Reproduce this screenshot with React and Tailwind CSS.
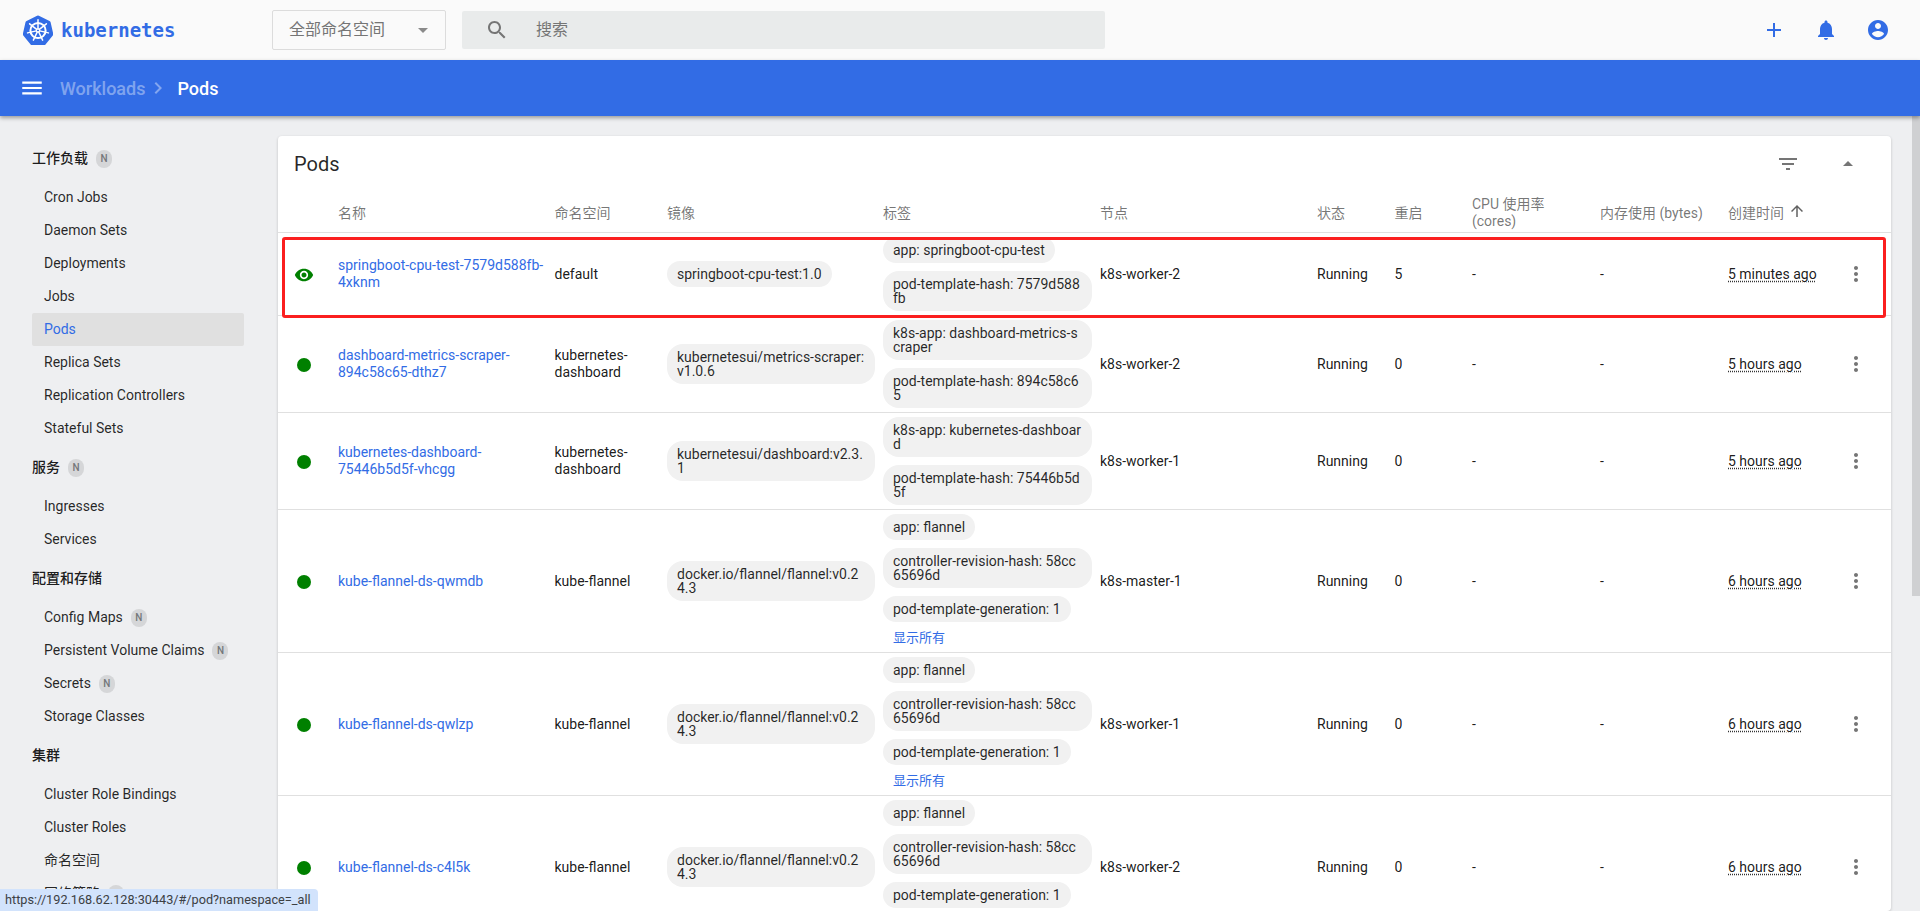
const P = {
  add: "M19 13h-6v6h-2v-6H5v-2h6V5h2v6h6v2z",
  bell: "M12 22c1.1 0 2-.9 2-2h-4c0 1.1.89 2 2 2zm6-6v-5c0-3.07-1.64-5.64-4.5-6.32V4c0-.83-.67-1.5-1.5-1.5s-1.5.67-1.5 1.5v.68C7.63 5.36 6 7.92 6 11v5l-2 2v1h16v-1l-2-2z",
  account: "M12 2C6.48 2 2 6.48 2 12s4.48 10 10 10 10-4.48 10-10S17.52 2 12 2zm0 3c1.66 0 3 1.34 3 3s-1.34 3-3 3-3-1.34-3-3 1.34-3 3-3zm0 14.2c-2.5 0-4.71-1.28-6-3.22.03-1.99 4-3.08 6-3.08 1.99 0 5.97 1.09 6 3.08-1.29 1.94-3.5 3.22-6 3.22z",
  search: "M15.5 14h-.79l-.28-.27C15.41 12.59 16 11.11 16 9.5 16 5.91 13.09 3 9.5 3S3 5.91 3 9.5 5.91 16 9.5 16c1.61 0 3.09-.59 4.23-1.57l.27.28v.79l5 4.99L20.49 19l-4.99-5zm-6 0C7.01 14 5 11.99 5 9.5S7.01 5 9.5 5 14 7.01 14 9.5 11.99 14 9.5 14z",
  menu: "M3 18h18v-2H3v2zm0-5h18v-2H3v2zm0-7v2h18V6H3z",
  filter: "M10 18h4v-2h-4v2zM3 6v2h18V6H3zm3 7h12v-2H6v2z",
  dropUp: "M7 14l5-5 5 5z",
  dropDown: "M7 10l5 5 5-5z",
  up: "M4 12l1.41 1.41L11 7.83V20h2V7.83l5.58 5.59L20 12l-8-8-8 8z",
  more: "M12 8c1.1 0 2-.9 2-2s-.9-2-2-2-2 .9-2 2 .9 2 2 2zm0 2c-1.1 0-2 .9-2 2s.9 2 2 2 2-.9 2-2-.9-2-2-2zm0 6c-1.1 0-2 .9-2 2s.9 2 2 2 2-.9 2-2-.9-2-2-2z",
  eye: "M12 4.5C7 4.5 2.73 7.61 1 12c1.73 4.39 6 7.5 11 7.5s9.27-3.11 11-7.5c-1.73-4.39-6-7.5-11-7.5zM12 17c-2.76 0-5-2.24-5-5s2.24-5 5-5 5 2.24 5 5-2.24 5-5 5zm0-8c-1.66 0-3 1.34-3 3s1.34 3 3 3 3-1.34 3-3-1.34-3-3-3z",
  chevron: "M10 6L8.59 7.41 13.17 12l-4.58 4.59L10 18l6-6z",
};

function Icon({ d, className }) {
  return (
    <svg viewBox="0 0 24 24" className={className} fill="currentColor">
      <path d={d} />
    </svg>
  );
}

function K8sLogo() {
  const spokes = [0, 51.4, 102.8, 154.3, 205.7, 257.1, 308.6];
  return (
    <svg viewBox="0 0 30 30" className="w-[30px] h-[30px] shrink-0">
      <path
        d="M15 .6a2 2 0 0 1 .9.2l10.6 5.1a2 2 0 0 1 1.1 1.4l2.6 11.4a2 2 0 0 1-.4 1.7l-7.3 9.1a2 2 0 0 1-1.6.8H9.2a2 2 0 0 1-1.6-.8L.3 20.4a2 2 0 0 1-.4-1.7L2.5 7.3a2 2 0 0 1 1.1-1.4L14.1.8A2 2 0 0 1 15 .6z"
        fill="#326ce5"
      />
      <g stroke="#fff" strokeLinecap="round" fill="none">
        <circle cx="15" cy="15.5" r="7.6" strokeWidth="2" />
        <circle cx="15" cy="15.5" r="1.7" strokeWidth="1.3" />
        {spokes.map((a) => (
          <g key={a} transform={`rotate(${a} 15 15.5)`}>
            <path d="M15 13.8V4.8" strokeWidth="1.5" />
          </g>
        ))}
      </g>
    </svg>
  );
}

function Badge() {
  return (
    <span className="inline-flex items-center justify-center w-4 h-[18px] rounded-full bg-[#d5d6d8] text-[10px] text-[#73767a] font-medium ml-2 leading-none">
      N
    </span>
  );
}

const sidebar = [
  { title: "工作负载", badge: true, items: [["Cron Jobs"], ["Daemon Sets"], ["Deployments"], ["Jobs"], ["Pods", false, true], ["Replica Sets"], ["Replication Controllers"], ["Stateful Sets"]] },
  { title: "服务", badge: true, items: [["Ingresses"], ["Services"]] },
  { title: "配置和存储", items: [["Config Maps", true], ["Persistent Volume Claims", true], ["Secrets", true], ["Storage Classes"]] },
  { title: "集群", items: [["Cluster Role Bindings"], ["Cluster Roles"], ["命名空间"], ["网络策略", true]] },
];

function Sidebar() {
  return (
    <nav className="w-[278px] shrink-0 pt-5 pl-8 pr-[34px] text-[14px] text-black/85">
      {sidebar.map((s) => (
        <div key={s.title}>
          <div className="h-[45px] flex items-center font-medium text-black/90">
            {s.title}
            {s.badge && <Badge />}
          </div>
          {s.items.map(([label, badge, active]) => (
            <div
              key={label}
              className={
                active
                  ? "h-[33px] flex items-center pl-3 rounded-[2px] bg-[#e0e0e0] text-[#326ce5]"
                  : "h-[33px] flex items-center pl-3"
              }
            >
              {label}
              {badge && <Badge />}
            </div>
          ))}
        </div>
      ))}
    </nav>
  );
}

const flannel = [
  "app: flannel",
  "controller-revision-hash: 58cc65696d",
  "pod-template-generation: 1",
];

const rows = [
  { name: "springboot-cpu-test-7579d588fb-4xknm", ns: "default", image: "springboot-cpu-test:1.0", labels: ["app: springboot-cpu-test", "pod-template-hash: 7579d588fb"], node: "k8s-worker-2", restarts: "5", age: "5 minutes ago", eye: true, h: "h-[83px]" },
  { name: "dashboard-metrics-scraper-894c58c65-dthz7", ns: "kubernetes-dashboard", image: "kubernetesui/metrics-scraper:v1.0.6", labels: ["k8s-app: dashboard-metrics-scraper", "pod-template-hash: 894c58c65"], node: "k8s-worker-2", restarts: "0", age: "5 hours ago", h: "h-[97px]" },
  { name: "kubernetes-dashboard-75446b5d5f-vhcgg", ns: "kubernetes-dashboard", image: "kubernetesui/dashboard:v2.3.1", labels: ["k8s-app: kubernetes-dashboard", "pod-template-hash: 75446b5d5f"], node: "k8s-worker-1", restarts: "0", age: "5 hours ago", h: "h-[97px]" },
  { name: "kube-flannel-ds-qwmdb", ns: "kube-flannel", image: "docker.io/flannel/flannel:v0.24.3", labels: flannel, more: true, node: "k8s-master-1", restarts: "0", age: "6 hours ago", h: "h-[143px]" },
  { name: "kube-flannel-ds-qwlzp", ns: "kube-flannel", image: "docker.io/flannel/flannel:v0.24.3", labels: flannel, more: true, node: "k8s-worker-1", restarts: "0", age: "6 hours ago", h: "h-[143px]" },
  { name: "kube-flannel-ds-c4l5k", ns: "kube-flannel", image: "docker.io/flannel/flannel:v0.24.3", labels: flannel, more: true, node: "k8s-worker-2", restarts: "0", age: "6 hours ago", h: "h-[143px]" },
];

const cols = "grid grid-cols-[60px_216.5px_112.5px_216px_217px_217px_77.5px_77.5px_128px_128px_1fr] items-center";

function Chip({ children, className = "" }) {
  return (
    <span className={`block w-fit rounded-[16px] bg-[#f1f1f1] px-2.5 py-1.5 leading-[14px] break-all text-black/85 ${className}`}>
      {children}
    </span>
  );
}

function Row({ r, first }) {
  return (
    <div className={`relative ${cols} ${r.h} shrink-0 border-b border-[#e0e0e0] text-[14px] text-black/90`}>
      <div className="flex justify-center pr-2 pt-[2px]">
        {r.eye ? (
          <Icon d={P.eye} className="w-5 h-5 text-[#008000]" />
        ) : (
          <span className="w-[14px] h-[14px] rounded-full bg-[#008000]" />
        )}
      </div>
      <a className="text-[#326ce5] leading-[17px] pr-2">{r.name}</a>
      <div className="leading-[17px] pr-2">{r.ns}</div>
      <div>
        <Chip className="max-w-[208px]">{r.image}</Chip>
      </div>
      <div className="flex flex-col">
        {r.labels.map((l) => (
          <Chip key={l} className="max-w-[209px] my-1">{l}</Chip>
        ))}
        {r.more && <a className="text-[#326ce5] text-[13px] h-[26px] leading-[24px] ml-2.5">显示所有</a>}
      </div>
      <div>{r.node}</div>
      <div>Running</div>
      <div>{r.restarts}</div>
      <div>-</div>
      <div>-</div>
      <div className="flex items-center justify-between pr-[23px]">
        <span className="underline decoration-dotted underline-offset-2 decoration-black/80">{r.age}</span>
        <Icon d={P.more} className="w-6 h-6 text-[#757575]" />
      </div>
      {first && (
        <div className="absolute left-[4px] right-[5px] top-[4px] h-[81px] border-[3px] border-[#fb1f1f] rounded-[3px] pointer-events-none" />
      )}
    </div>
  );
}

function Card() {
  return (
    <section className="w-[1613px] mt-5 bg-white rounded-[4px] shadow-[0_1px_3px_rgba(0,0,0,0.2)] flex flex-col">
      <div className="h-[56px] flex items-center justify-between shrink-0 pl-4 pr-[31px]">
        <h1 className="text-[20px] text-black/85">Pods</h1>
        <div className="flex items-center gap-[36px] text-[#757575]">
          <Icon d={P.filter} className="w-6 h-6" />
          <Icon d={P.dropUp} className="w-6 h-6" />
        </div>
      </div>
      <div className={`${cols} h-[41px] pt-[2px] shrink-0 border-b border-[#e0e0e0] text-[14px] leading-[17px] text-black/55`}>
        <div />
        <div>名称</div>
        <div>命名空间</div>
        <div>镜像</div>
        <div>标签</div>
        <div>节点</div>
        <div>状态</div>
        <div>重启</div>
        <div className="w-[90px]">CPU 使用率 (cores)</div>
        <div>内存使用 (bytes)</div>
        <div className="flex items-center gap-1">
          创建时间
          <Icon d={P.up} className="w-[18px] h-[18px] text-[#616161] -mt-1" />
        </div>
      </div>
      {rows.map((r, i) => (
        <Row key={r.name} r={r} first={i === 0} />
      ))}
    </section>
  );
}

export default function App() {
  return (
    <div
      className="relative h-[911px] w-full overflow-hidden bg-[#eeeff1] flex flex-col"
      style={{ fontFamily: 'Roboto, "Noto Sans CJK SC", sans-serif' }}
    >
      <header className="h-[60px] shrink-0 bg-[#fafafa] flex items-center">
        <div className="w-[272px] shrink-0 flex items-center pl-[23px] gap-2">
          <K8sLogo />
          <span className="text-[19px] font-bold text-[#326ce5]" style={{ fontFamily: '"DejaVu Sans Mono", monospace' }}>kubernetes</span>
        </div>
        <div className="w-[174px] h-10 shrink-0 border border-[#dcdcdc] rounded-[2px] flex items-center justify-between pl-4 pr-2.5 text-[16px] text-[#757575]">
          全部命名空间
          <Icon d={P.dropDown} className="w-6 h-6 text-[#8a8a8a]" />
        </div>
        <div className="w-[643px] h-[38px] ml-4 shrink-0 rounded-[2px] bg-[#e9ebeb] flex items-center pl-[23px] gap-[12px] text-[16px] text-[#757575]">
          <Icon d={P.search} className="w-6 h-6" />
          <span className="ml-[15px]">搜索</span>
        </div>
        <div className="ml-auto flex items-center gap-7 pr-[30px] text-[#326ce5]">
          <Icon d={P.add} className="w-6 h-6" />
          <Icon d={P.bell} className="w-6 h-6" />
          <Icon d={P.account} className="w-6 h-6" />
        </div>
      </header>
      <div className="relative z-10 h-14 shrink-0 bg-[#326ce5] shadow-[0_2px_4px_rgba(0,0,0,0.35)] flex items-center pl-[19px] text-white text-[18px] font-medium">
        <Icon d={P.menu} className="w-[26px] h-[26px]" />
        <span className="ml-[15px] text-white/40">Workloads</span>
        <Icon d={P.chevron} className="w-6 h-6 ml-px text-white/40" />
        <span className="ml-[7px]">Pods</span>
      </div>
      <div className="flex flex-1 min-h-0">
        <Sidebar />
        <Card />
      </div>
      <div className="absolute right-0 top-[116px] w-2 h-[480px] bg-[#cfd0d2]" />
      <div className="absolute left-0 bottom-0 w-[318px] h-[22px] overflow-hidden rounded-tr-[4px] bg-[#d2e3fc] pl-[5px] text-[12.7px] leading-[22px] text-[#3c4043]">
        https://192.168.62.128:30443/#/pod?namespace=_all
      </div>
    </div>
  );
}
